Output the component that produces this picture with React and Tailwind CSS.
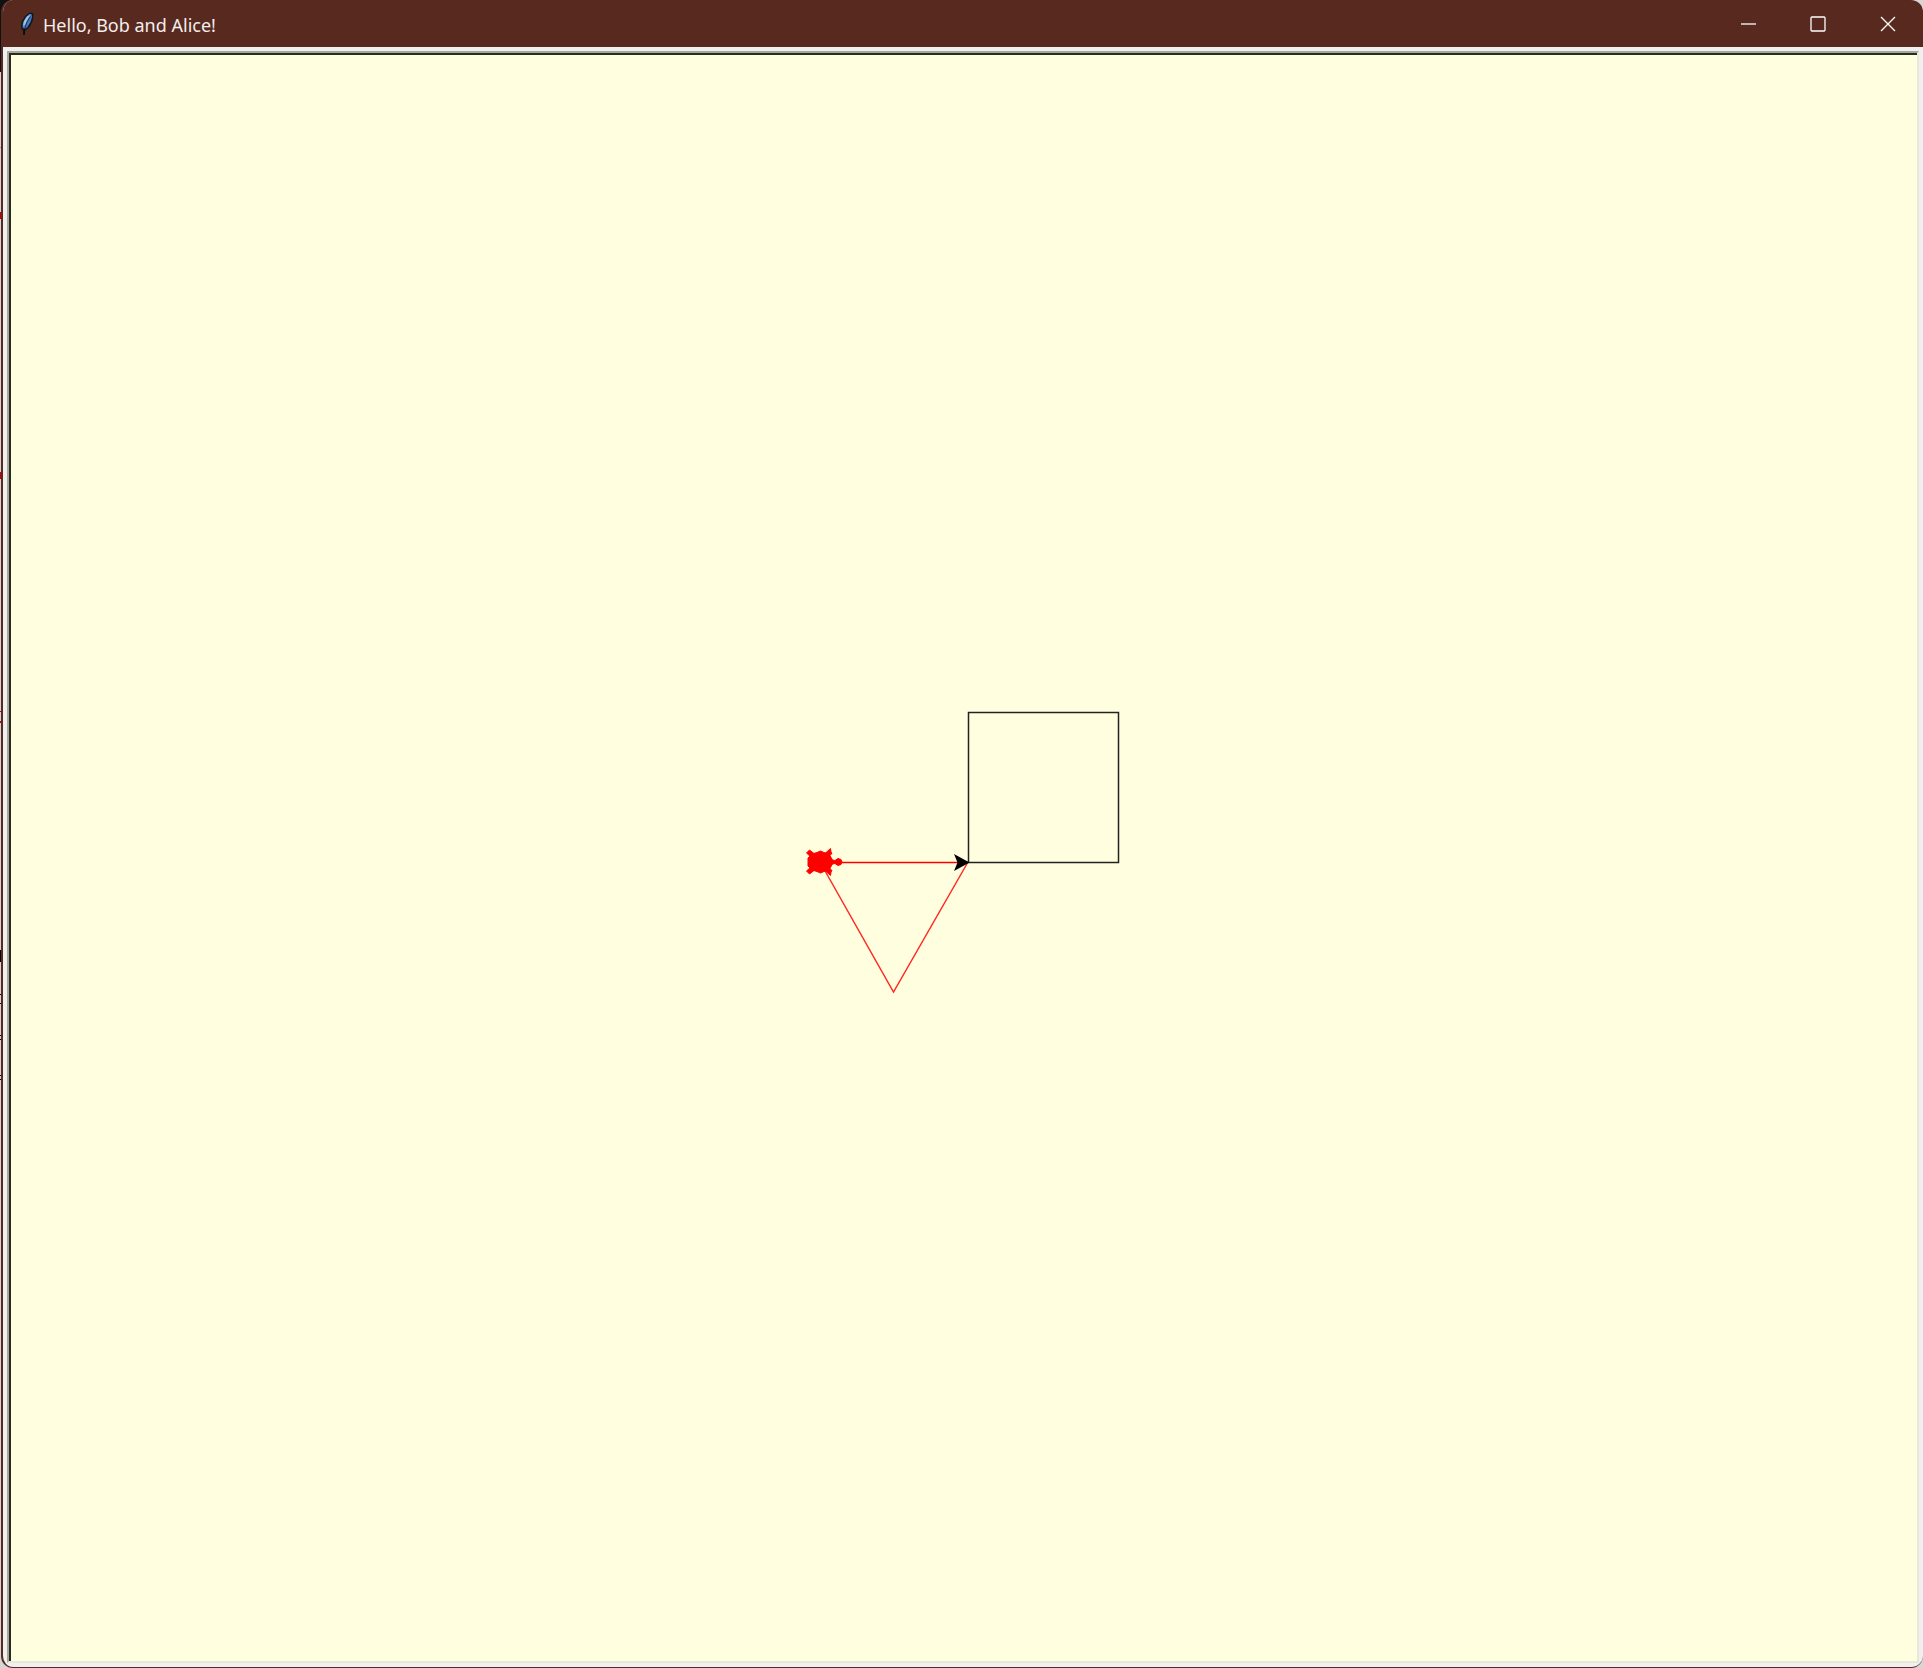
import React from "react";

function Feather() {
  return (
    <svg className="h-6 w-4" viewBox="0 0 16 24" aria-hidden="true">
      <path d="M13 0.500 L14.500 2 L14 8 L11 14.500 L7 18 L5.500 19 L5.500 23 L4.500 23 L4 19 L2 16 L2.500 10 L6 4 L10 1Z" fill="#14161d" />
      <path d="M12.500 2 L13 5 L11.500 10 L8.500 15 L5.500 17 L3.500 15.500 L4 10.500 L7 5 L10.500 2Z" fill="#3f7cc4" />
      <path d="M11.500 2.500 L8 4.500 L5 9 L4 14 L6 13 L8 8.500Z" fill="#a4c2dc" />
      <path d="M11.500 4.500 L8 10 L5.500 17" stroke="#1d3557" strokeWidth="1" fill="none" />
      <path d="M5.500 17 L5 23" stroke="#0b0b0f" strokeWidth="1.500" fill="none" />
    </svg>
  );
}

function CaptionButton({ label, children }) {
  return (
    <button type="button" aria-label={label} className="flex h-full w-[70px] items-center justify-center">
      <svg className="size-4" viewBox="0 0 16 16" fill="none" stroke="#fff" strokeWidth="1.300">
        {children}
      </svg>
    </button>
  );
}

function Drawing() {
  return (
    <svg width="320" height="320" viewBox="804 698 320 320" role="img" aria-label="Turtle drawing">
      <path d="M820 862.500H968" fill="none" stroke="#f00" strokeWidth="1.500" />
      <path d="M820 862L893.500 992L968 862" fill="none" stroke="#ff2a25" strokeWidth="1.500" />
      <path d="M968.500 712.500h150v150h-150z" fill="none" stroke="#222" strokeWidth="1.500" />
      <path d="M969.500 862.500L954 854L957.500 862.500L954 871Z" fill="#000" />
      <g fill="#f00" stroke="#f00" strokeWidth="1">
        <path d="M808 858L812 854L817 852.500L820.500 851L824 852.500L829 854L832.500 860L835 860.500L838 858.500L841 859.500L842 862L841 864.500L838 865.500L835 863.500L832.500 864L829 870L824 871.500L820.500 873L817 871.500L812 870L808 866Z" />
        <path d="M811 857L806.500 853L809.500 850L814 853.500Z" />
        <path d="M811 867L806.500 871L809.500 874L814 870.500Z" />
        <path d="M825 853.500L830.500 848.500L831 852L832 853.500L828 857Z" />
        <path d="M825 870.500L830.500 875.500L831 872L832 870.500L828 867Z" />
      </g>
    </svg>
  );
}

export default function App() {
  return (
    <div className="flex min-h-screen bg-[#d6d6d6] bg-[linear-gradient(to_bottom,#111_72px,transparent_72px,transparent_147px,#999_147px,#999_148px,transparent_148px,transparent_212px,#c00_212px,#c00_219px,transparent_219px,transparent_472px,#c00_472px,#c00_479px,transparent_479px,transparent_711px,#c00_711px,#c00_712px,transparent_712px,transparent_721px,#c00_721px,#c00_723px,transparent_723px,transparent_950px,#000_950px,#000_962px,transparent_962px,transparent_994px,#000_994px,#000_995px,transparent_995px,transparent_1003px,#000_1003px,#000_1004px,transparent_1004px,transparent_1035px,#000_1035px,#000_1036px,transparent_1036px,transparent_1039px,#000_1039px,#000_1040px,transparent_1040px,transparent_1075px,#000_1075px,#000_1076px,transparent_1076px,transparent_1079px,#000_1079px,#000_1080px,transparent_1080px)] bg-[length:16px_100%] bg-no-repeat">
      <div className="ml-px flex flex-1 flex-col overflow-hidden rounded-xl border-b border-l-2 border-[#57291f] bg-[#f0f0f0]">
        <header className="flex h-[47px] items-center bg-[#57291f] pl-4 text-white">
          <Feather />
          <h1 className="ml-2 pt-0.5 font-['Noto_Sans',sans-serif] text-lg leading-6 text-[#f4eeec]">Hello, Bob and Alice!</h1>
          <div className="ml-auto flex h-full">
            <CaptionButton label="Minimize"><path d="M1 8h15" /></CaptionButton>
            <CaptionButton label="Maximize"><rect x="1" y="1" width="14" height="14" rx="1" /></CaptionButton>
            <CaptionButton label="Close"><path d="M1 1l14 14M15 1L1 15" /></CaptionButton>
          </div>
        </header>
        <main className="m-1 flex flex-1 border-2 border-b-[#e8e8d8] border-l-[#a8a898] border-r-[#e8e8d8] border-t-[#a8a898]">
          <div className="flex flex-1 items-center justify-center border-l-2 border-t-2 border-[#2b2b26] bg-[#ffffdf]">
            <Drawing />
          </div>
        </main>
      </div>
    </div>
  );
}
